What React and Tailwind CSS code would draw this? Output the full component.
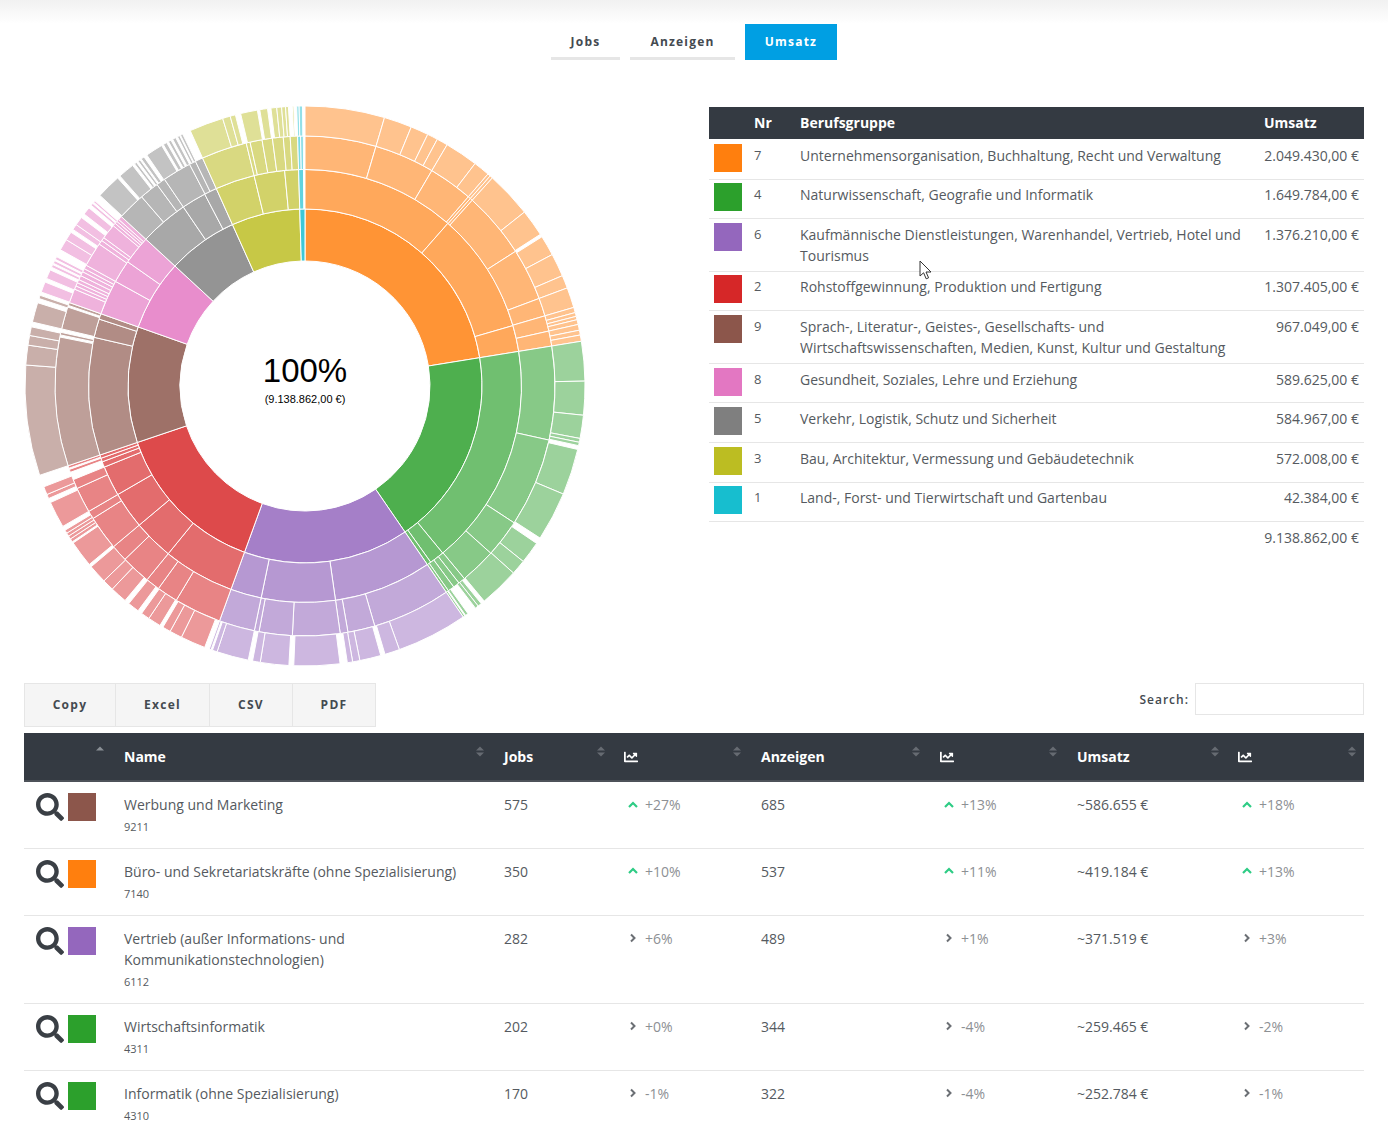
import React from "react";
import { FaSearch, FaChartLine } from "react-icons/fa";

const seq = (...a) => a.slice(1).map((v, i) => [a[i], v]);
const R = [125, 177, 216.5, 250, 280];
const OP = [0.84, 0.68, 0.57, 0.47];

const groups = [
  { c: "#ff7f0e", rings: [
    seq(0, 80.8),
    seq(0, 41.3, 73.8, 80.8),
    seq(0, 16.5, 30.5, 40.8, 41.4, 42, 57.4, 69.5, 73.7, 77.3, 80.8),
    [...seq(0, 16.5, 22.3, 26, 28.2, 30.5, 37.4, 40.8, 41.4, 42, 51.6, 57.2), ...seq(57.8, 62, 66.8, 69.5, 73.7, 74.8, 75.6, 76.3, 77.3, 78.5, 79.5, 80.8)],
  ]},
  { c: "#2ca02c", rings: [
    seq(80.8, 145.6),
    seq(80.8, 140.5, 144.5, 145.6),
    seq(80.8, 102.5, 123.2, 132, 140.4, 142, 143.5, 145, 145.6),
    [...seq(80.8, 89, 96, 100.8, 101.6, 102.3), ...seq(103.1, 112.7, 122.9), ...seq(124.2, 128.8, 131.9, 140.2), ...seq(141, 141.8, 142.5), ...seq(144.4, 145), [145.2, 145.6]],
  ]},
  { c: "#9467bd", rings: [
    seq(145.6, 200),
    seq(145.6, 171.9, 191.7, 200),
    seq(145.6, 163.8, 170.1, 171.9, 182.9, 190.6, 191.7, 200),
    [...seq(145.6, 160.3, 163.4), ...seq(164.3, 168.7, 170.2, 171.3), ...seq(172.8, 182.3), ...seq(183.3, 189.2, 190.8), ...seq(191.7, 198.3, 199.3), [199.6, 200]],
  ]},
  { c: "#d62728", rings: [
    seq(200, 251.4),
    seq(200, 219.2, 230, 239.9, 248, 249.5, 250.5, 251.4),
    [...seq(200, 211, 215.9, 219.2, 226.1, 230, 238, 239.9, 245.8, 248), [249.8, 250.5], [250.8, 251.4]],
    [...seq(201, 206.2, 208.8, 210.5), ...seq(211.2, 213.9, 215.7), ...seq(216.6, 219), ...seq(220, 223.5, 225.9, 229.8), ...seq(230.4, 235.9), ...seq(236.2, 236.9, 237.6, 238.3, 239), ...seq(239.9, 245.4), ...seq(246.3, 247.2, 248.9)],
  ]},
  { c: "#8c564b", rings: [
    seq(251.4, 289.5),
    seq(251.4, 283, 288, 289.5),
    [...seq(251.4, 281.3), ...seq(281.8, 282.4), ...seq(283.2, 288.4), [288.8, 289.5]],
    [...seq(251.4, 274.3, 278.4, 280.4, 282.2), ...seq(283.2, 287.3), [288.2, 288.9]],
  ]},
  { c: "#e377c2", rings: [
    seq(289.5, 312.7),
    seq(289.5, 298.9, 305, 312.7),
    seq(289.5, 292.8, 293.6, 294.4, 295.2, 296.2, 297.2, 298, 298.9, 304.6, 305.6, 306.4, 309.9, 310.6, 311.2, 311.8, 312.7),
    [...seq(289.6, 291.8), ...seq(292.6, 294.5), [295.1, 295.7], [296, 296.6], [296.9, 297.5], ...seq(299.1, 301.5, 303.3), ...seq(304, 305.2, 307), ...seq(307.9, 309.5), [310.2, 310.7], [311, 311.4]],
  ]},
  { c: "#7f7f7f", rings: [
    seq(312.7, 335.8),
    seq(312.7, 325.8, 332.4, 335.8),
    seq(312.7, 319.2, 323.7, 325.8, 332.5, 334, 335.8),
    [...seq(312.9, 318), ...seq(318.6, 322), [322.5, 323], [323.4, 323.9], [324.2, 324.9], ...seq(325.6, 329.2), [329.6, 330.4], [330.8, 331.4], [331.8, 332.5], [332.9, 333.4], [333.6, 334.1]],
  ]},
  { c: "#bcbd22", rings: [
    seq(335.8, 358.3),
    seq(335.8, 346.4, 354.6, 358.3),
    seq(335.8, 346.4, 347.3, 350.1, 352.5, 355, 356.6, 358.3),
    [...seq(335.8, 342.9, 344.5, 345.6), ...seq(346.7, 350.2), ...seq(350.7, 352.3), ...seq(353, 354.2, 355.2, 356, 356.6), [357.4, 357.7]],
  ]},
  { c: "#17becf", rings: [
    seq(358.3, 360),
    seq(358.3, 359.6),
    seq(358.3, 359, 359.6),
    seq(358.3, 358.8, 359.5),
  ]},
];

const pt = (r, a) => {
  const t = (a * Math.PI) / 180;
  return `${(280 + r * Math.sin(t)).toFixed(2)} ${(280 - r * Math.cos(t)).toFixed(2)}`;
};
const arc = (r0, r1, a, b) => {
  const l = b - a > 180 ? 1 : 0;
  return `M${pt(r1, a)}A${r1} ${r1} 0 ${l} 1 ${pt(r1, b)}L${pt(r0, b)}A${r0} ${r0} 0 ${l} 0 ${pt(r0, a)}Z`;
};

function Sunburst() {
  return (
    <svg width="560" height="560" viewBox="0 0 560 560" className="block">
      {groups.map((g) =>
        g.rings.map((ring, i) =>
          ring.map(([a, b]) => (
            <path key={g.c + i + a} d={arc(R[i], R[i + 1], a, b)} fill={g.c} fillOpacity={OP[i]} stroke="#fff" strokeWidth="1" />
          ))
        )
      )}
      <text x="280" y="276" textAnchor="middle" fontSize="33" fill="#000" fontFamily="'Liberation Sans', sans-serif">100%</text>
      <text x="280" y="297" textAnchor="middle" fontSize="11" fill="#000" fontFamily="'Liberation Sans', sans-serif">(9.138.862,00 €)</text>
    </svg>
  );
}

const groupRows = [
  { h: "h-[40px]", t: "pt-[6px]", s: "pt-[5px]", c: "bg-[#ff7f0e]", nr: 7, name: "Unternehmensorganisation, Buchhaltung, Recht und Verwaltung", v: "2.049.430,00 €" },
  { h: "h-[39px]", t: "pt-[4px]", s: "pt-[3px]", c: "bg-[#2ca02c]", nr: 4, name: "Naturwissenschaft, Geografie und Informatik", v: "1.649.784,00 €" },
  { h: "h-[53px]", t: "pt-[5px]", s: "pt-[4px]", c: "bg-[#9467bd]", nr: 6, name: "Kaufmännische Dienstleistungen, Warenhandel, Vertrieb, Hotel und Tourismus", v: "1.376.210,00 €" },
  { h: "h-[39px]", t: "pt-[4px]", s: "pt-[3px]", c: "bg-[#d62728]", nr: 2, name: "Rohstoffgewinnung, Produktion und Fertigung", v: "1.307.405,00 €" },
  { h: "h-[53px]", t: "pt-[5px]", s: "pt-[4px]", c: "bg-[#8c564b]", nr: 9, name: "Sprach-, Literatur-, Geistes-, Gesellschafts- und Wirtschaftswissenschaften, Medien, Kunst, Kultur und Gestaltung", v: "967.049,00 €" },
  { h: "h-[39px]", t: "pt-[5px]", s: "pt-[4px]", c: "bg-[#e377c2]", nr: 8, name: "Gesundheit, Soziales, Lehre und Erziehung", v: "589.625,00 €" },
  { h: "h-[40px]", t: "pt-[5px]", s: "pt-[4px]", c: "bg-[#7f7f7f]", nr: 5, name: "Verkehr, Logistik, Schutz und Sicherheit", v: "584.967,00 €" },
  { h: "h-[40px]", t: "pt-[5px]", s: "pt-[4px]", c: "bg-[#bcbd22]", nr: 3, name: "Bau, Architektur, Vermessung und Gebäudetechnik", v: "572.008,00 €" },
  { h: "h-[39px]", t: "pt-[4px]", s: "pt-[3px]", c: "bg-[#17becf]", nr: 1, name: "Land-, Forst- und Tierwirtschaft und Gartenbau", v: "42.384,00 €" },
];

function GroupTable() {
  return (
    <table className="w-[655px] table-fixed border-collapse text-[14px] leading-[21px] text-[#555a60]">
      <colgroup>
        <col className="w-[45px]" />
        <col className="w-[46px]" />
        <col className="w-[464px]" />
        <col className="w-[100px]" />
      </colgroup>
      <thead>
        <tr className="h-[32px] bg-[#343a42] text-left font-bold text-white">
          <th />
          <th className="pb-[2px] align-middle">Nr</th>
          <th className="pb-[2px] align-middle">Berufsgruppe</th>
          <th className="pb-[2px] align-middle">Umsatz</th>
        </tr>
      </thead>
      <tbody>
        {groupRows.map((r) => (
          <tr key={r.nr} className={`${r.h} border-b border-[#e6e6e6]`}>
            <td className={`pl-[5px] ${r.s} align-top`}>
              <div className={`h-[28px] w-[28px] ${r.c}`} />
            </td>
            <td className={`${r.t} align-top text-[13px]`}>{r.nr}</td>
            <td className={`${r.t} pr-[20px] align-top`}>{r.name}</td>
            <td className={`${r.t} pr-[5px] text-right align-top`}>{r.v}</td>
          </tr>
        ))}
        <tr className="h-[34px]">
          <td colSpan={4} className="pt-[5px] pr-[5px] text-right align-top">9.138.862,00 €</td>
        </tr>
      </tbody>
    </table>
  );
}

const Sort = ({ onlyUp }) => (
  <svg width="8" height="11" viewBox="0 0 8 11" className="mt-[-10px] shrink-0">
    <path d="M4 0.5 8 4.5H0Z" fill={onlyUp ? "#8a8f95" : "#666b72"} />
    {!onlyUp && <path d="M4 10.5 8 6.5H0Z" fill="#666b72" />}
  </svg>
);

const Up = () => (
  <svg width="10" height="8" viewBox="0 0 10 8" className="shrink-0">
    <path d="M1 6 5 2l4 4" fill="none" stroke="#2ecc85" strokeWidth="2.2" />
  </svg>
);
const Right = () => (
  <svg width="10" height="10" viewBox="0 0 10 10" className="shrink-0">
    <path d="M3 1.5 6.5 5 3 8.5" fill="none" stroke="#6b6f74" strokeWidth="2" />
  </svg>
);

const rows = [
  { h: "h-[67px]", c: "bg-[#8c564b]", name: "Werbung und Marketing", id: "9211", j: "575", jt: "+27%", a: "685", at: "+13%", u: "~586.655 €", ut: "+18%", up: true },
  { h: "h-[67px]", c: "bg-[#ff7f0e]", name: "Büro- und Sekretariatskräfte (ohne Spezialisierung)", id: "7140", j: "350", jt: "+10%", a: "537", at: "+11%", u: "~419.184 €", ut: "+13%", up: true },
  { h: "h-[88px]", c: "bg-[#9467bd]", name: "Vertrieb (außer Informations- und Kommunikationstechnologien)", id: "6112", j: "282", jt: "+6%", a: "489", at: "+1%", u: "~371.519 €", ut: "+3%" },
  { h: "h-[67px]", c: "bg-[#2ca02c]", name: "Wirtschaftsinformatik", id: "4311", j: "202", jt: "+0%", a: "344", at: "-4%", u: "~259.465 €", ut: "-2%" },
  { h: "h-[67px]", c: "bg-[#2ca02c]", name: "Informatik (ohne Spezialisierung)", id: "4310", j: "170", jt: "-1%", a: "322", at: "-4%", u: "~252.784 €", ut: "-1%" },
];

const Trend = ({ v, up }) => (
  <td className="pt-[12px] align-top">
    <div className="flex items-center gap-[7px] pl-[4px] text-[#8d9094]">
      {up ? <Up /> : <Right />}
      <span>{v}</span>
    </div>
  </td>
);

const HeadCell = ({ children, pr, onlyUp }) => (
  <th className="align-middle font-bold">
    <div className={`flex items-center justify-between ${pr}`}>
      <span>{children}</span>
      <Sort onlyUp={onlyUp} />
    </div>
  </th>
);

function DataTable() {
  return (
    <table className="w-[1340px] table-fixed border-collapse text-[14px] leading-[21px] text-[#555a60]">
      <colgroup>
        <col className="w-[100px]" />
        <col className="w-[380px]" />
        <col className="w-[120px]" />
        <col className="w-[137px]" />
        <col className="w-[179px]" />
        <col className="w-[137px]" />
        <col className="w-[161px]" />
        <col className="w-[126px]" />
      </colgroup>
      <thead>
        <tr className="h-[48px] border-b-[2px] border-[#4d5259] bg-[#343a42] text-left text-white">
          <HeadCell pr="pr-[20px]" onlyUp />
          <HeadCell pr="pr-[20px]">Name</HeadCell>
          <HeadCell pr="pr-[19px]">Jobs</HeadCell>
          <HeadCell pr="pr-[20px]"><FaChartLine size={14} /></HeadCell>
          <HeadCell pr="pr-[20px]">Anzeigen</HeadCell>
          <HeadCell pr="pr-[20px]"><FaChartLine size={14} /></HeadCell>
          <HeadCell pr="pr-[19px]">Umsatz</HeadCell>
          <HeadCell pr="pr-[8px]"><FaChartLine size={14} /></HeadCell>
        </tr>
      </thead>
      <tbody>
        {rows.map((r) => (
          <tr key={r.id} className={`${r.h} border-b border-[#e6e6e6]`}>
            <td className="pl-[12px] pt-[11px] align-top">
              <div className="flex items-start gap-[4px]">
                <FaSearch size={28} className="text-[#3a3f45]" />
                <div className={`h-[28px] w-[28px] ${r.c}`} />
              </div>
            </td>
            <td className="pt-[12px] pr-[20px] align-top">
              <div>{r.name}</div>
              <div className="mt-[4px] text-[11px] leading-[16px]">{r.id}</div>
            </td>
            <td className="pt-[12px] align-top">{r.j}</td>
            <Trend v={r.jt} up={r.up} />
            <td className="pt-[12px] align-top">{r.a}</td>
            <Trend v={r.at} up={r.up} />
            <td className="pt-[12px] align-top">{r.u}</td>
            <Trend v={r.ut} up={r.up} />
          </tr>
        ))}
      </tbody>
    </table>
  );
}

export default function App() {
  return (
    <div className="relative h-[1122px] overflow-hidden bg-white font-['Open_Sans',sans-serif]">
      <div className="h-[24px] bg-linear-to-b from-[#f1f1f1] to-white" />
      <div className="flex h-[36px] justify-center gap-[10px] text-[12px] font-bold tracking-[1.2px] text-[#444a50]">
        <div className="flex w-[69px] items-center justify-center border-b-[3px] border-[#e6e6e6] pt-[2px]">Jobs</div>
        <div className="flex w-[105px] items-center justify-center border-b-[3px] border-[#e6e6e6] pt-[2px]">Anzeigen</div>
        <div className="flex w-[92px] items-center justify-center bg-[#009fe3] text-white">Umsatz</div>
      </div>

      <div className="mt-[46px] flex items-start pl-[25px] pr-[24px]">
        <div className="w-[684px] shrink-0">
          <Sunburst />
        </div>
        <div className="pt-[1px]">
          <GroupTable />
        </div>
      </div>

      <div className="mt-[17px] px-[24px]">
        <div className="flex items-start justify-between">
          <div className="flex h-[44px] border border-[#e6e6e6] bg-[#f5f5f5] text-[12px] font-bold tracking-[1.3px] text-[#444a50]">
            <div className="flex w-[91px] items-center justify-center border-r border-[#e6e6e6]">Copy</div>
            <div className="flex w-[94px] items-center justify-center border-r border-[#e6e6e6]">Excel</div>
            <div className="flex w-[83px] items-center justify-center border-r border-[#e6e6e6]">CSV</div>
            <div className="flex w-[82px] items-center justify-center">PDF</div>
          </div>
          <div className="flex items-start gap-[6px] text-[12px] font-semibold tracking-[1px] text-[#444a50]">
            <span className="pt-[8px]">Search:</span>
            <div className="h-[32px] w-[169px] border border-[#e6e6e6]" />
          </div>
        </div>
        <div className="mt-[6px]">
          <DataTable />
        </div>
      </div>

      <svg width="14" height="20" viewBox="0 0 14 20" className="absolute left-[919px] top-[260px]">
        <path d="M1 1v15l3.6-3.2 2.6 6 2.4-1-2.6-5.8h5Z" fill="#fff" stroke="#333" strokeWidth="1" />
      </svg>
    </div>
  );
}
